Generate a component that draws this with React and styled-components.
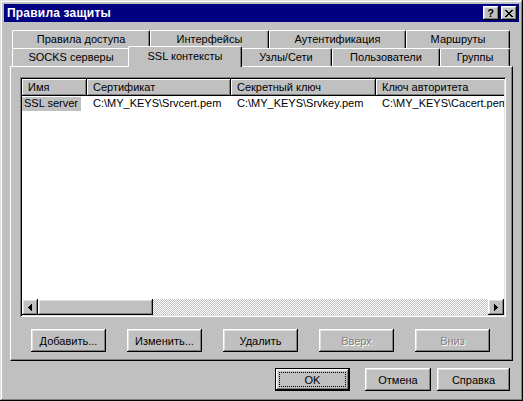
import React from 'react';
import styled, { createGlobalStyle, css } from 'styled-components';

const GlobalStyle = createGlobalStyle`
  html, body {
    margin: 0;
    padding: 0;
    background: #c0c0c0;
  }
  body {
    font-family: "Liberation Sans", Arial, sans-serif;
    font-size: 11px;
    color: #000;
  }
  * { box-sizing: border-box; }
`;

// classic 3d bevels
const raised = css`
  box-shadow: inset -1px -1px #000, inset 1px 1px #fff,
    inset -2px -2px #808080, inset 2px 2px #dfdfdf;
`;

const Window = styled.div`
  width: 523px;
  height: 401px;
  padding: 4px;
  background: #c0c0c0;
  display: flex;
  flex-direction: column;
  box-shadow: inset -1px -1px #000, inset 1px 1px #dfdfdf,
    inset -2px -2px #808080, inset 2px 2px #fff;
`;

const TitleBar = styled.div`
  height: 18px;
  background: #000080;
  display: flex;
  align-items: center;
  padding: 0 2px 0 3px;
`;

const Title = styled.div`
  flex: 1;
  color: #fff;
  font-weight: bold;
  font-size: 12px;
  letter-spacing: 0.2px;
`;

const CaptionButtons = styled.div`
  display: flex;
  gap: 2px;
`;

const CaptionButton = styled.div`
  width: 16px;
  height: 14px;
  background: #c0c0c0;
  ${raised};
  display: flex;
  align-items: center;
  justify-content: center;
  font-weight: bold;
  font-size: 11px;
  line-height: 1;
  padding-right: 1px;
`;

const Body = styled.div`
  flex: 1;
  display: flex;
  flex-direction: column;
  padding: 8px 6px 0 6px;
`;

const TabStrip = styled.div`
  margin: 0 3px 0 2px;
`;

const TabRow = styled.div`
  display: flex;
  height: 18px;
`;

const Tab = styled.div`
  width: ${p => p.$w}px;
  height: 18px;
  flex-shrink: 0;
  background: #c0c0c0;
  border-top: 1px solid #fff;
  border-left: 1px solid #fff;
  border-right: 1px solid #000;
  border-radius: 2px 2px 0 0;
  box-shadow: inset -1px 0 #808080;
  display: flex;
  justify-content: center;
  padding-top: 2px;
  white-space: nowrap;

  ${p => p.$active && css`
    width: ${p.$w + 4}px;
    height: 21px;
    margin: -2px -2px -1px;
    position: relative;
    z-index: 1;
    padding-top: 3px;
  `}
`;

const Panel = styled.div`
  height: 295px;
  border-top: 1px solid #fff;
  border-left: 1px solid #fff;
  border-right: 1px solid #000;
  border-bottom: 1px solid #000;
  box-shadow: inset -1px -1px #808080;
  padding: 10px 0 0 9px;
  display: flex;
  flex-direction: column;
`;

const ListView = styled.div`
  width: 486px;
  height: 240px;
  background: #fff;
  padding: 2px;
  display: flex;
  flex-direction: column;
  overflow: hidden;
  box-shadow: inset 1px 1px #808080, inset -1px -1px #fff,
    inset 2px 2px #000, inset -2px -2px #dfdfdf;
`;

const HeaderRow = styled.div`
  display: flex;
  height: 17px;
  overflow: hidden;
  flex-shrink: 0;
`;

const HeaderCell = styled.div`
  width: ${p => p.$w}px;
  flex-shrink: 0;
  background: #c0c0c0;
  padding: 2px 0 0 6px;
  white-space: nowrap;
  box-shadow: inset -1px -1px #000, inset 1px 1px #fff, inset -2px -2px #808080;
`;

const Row = styled.div`
  display: flex;
  height: 15px;
  overflow: hidden;
  flex-shrink: 0;
  padding-top: 1px;
`;

const Cell = styled.div`
  width: ${p => p.$w}px;
  flex-shrink: 0;
  padding-left: ${p => (p.$first ? 0 : 6)}px;
  white-space: nowrap;
  overflow: hidden;
`;

const Selected = styled.span`
  background: #c0c0c0;
  padding: 0 3px 0 2px;
  display: inline-block;
  height: 14px;
`;

const Spacer = styled.div`
  flex: 1;
`;

const ScrollBar = styled.div`
  display: flex;
  height: 16px;
  flex-shrink: 0;
`;

const ScrollButton = styled.div`
  width: 16px;
  height: 16px;
  flex-shrink: 0;
  background: #c0c0c0;
  ${raised};
  display: flex;
  align-items: center;
  justify-content: center;
`;

const Thumb = styled.div`
  width: 115px;
  height: 16px;
  flex-shrink: 0;
  background: #c0c0c0;
  ${raised};
`;

const Track = styled.div`
  flex: 1;
  background: repeating-conic-gradient(#c0c0c0 0% 25%, #fff 0% 50%) 0 0 / 2px 2px;
`;

const ActionRow = styled.div`
  display: flex;
  gap: 21px;
  margin: 12px 0 0 11px;
`;

const Button = styled.button`
  width: ${p => p.$w || 75}px;
  height: 23px;
  padding: 0;
  border: none;
  background: #c0c0c0;
  font-family: inherit;
  font-size: 11px;
  color: #000;
  position: relative;
  ${raised};

  ${p => p.disabled && css`
    color: #808080;
    text-shadow: 1px 1px #fff;
  `}

  ${p => p.$default && css`
    border: 1px solid #000;
    &::after {
      content: '';
      position: absolute;
      inset: 3px;
      border: 1px dotted #000;
    }
  `}
`;

const Footer = styled.div`
  display: flex;
  justify-content: flex-end;
  padding: 7px 3px 0 0;
`;

const FooterButtons = styled.div`
  display: flex;
  gap: ${p => p.$gap}px;
`;

const CloseIcon = () => (
  <svg width="8" height="7" viewBox="0 0 8 7" shapeRendering="crispEdges">
    <path d="M0 0h2v1H0zM6 0h2v1H6zM1 1h2v1H1zM5 1h2v1H5zM2 2h4v1H2zM3 3h2v1H3zM2 4h4v1H2zM1 5h2v1H1zM5 5h2v1H5zM0 6h2v1H0zM6 6h2v1H6z" fill="#000" />
  </svg>
);

const Arrow = ({ dir }) => (
  <svg width="4" height="7" viewBox="0 0 4 7" shapeRendering="crispEdges">
    {dir === 'left'
      ? <path d="M3 0h1v7H3zM2 1h1v5H2zM1 2h1v3H1zM0 3h1v1H0z" fill="#000" />
      : <path d="M0 0h1v7H0zM1 1h1v5H1zM2 2h1v3H2zM3 3h1v1H3z" fill="#000" />}
  </svg>
);

const backTabs = [
  { label: 'Правила доступа', w: 138 },
  { label: 'Интерфейсы', w: 119 },
  { label: 'Аутентификация', w: 137 },
  { label: 'Маршруты', w: 104 },
];

const frontTabs = [
  { label: 'SOCKS серверы', w: 118 },
  { label: 'SSL контексты', w: 110, active: true },
  { label: 'Узлы/Сети', w: 92 },
  { label: 'Пользователи', w: 108 },
  { label: 'Группы', w: 70 },
];

const columns = [
  { label: 'Имя', w: 65 },
  { label: 'Сертификат', w: 144 },
  { label: 'Секретный ключ', w: 145 },
  { label: 'Ключ авторитета', w: 150 },
];

const rows = [
  ['SSL server', 'C:\\MY_KEYS\\Srvcert.pem', 'C:\\MY_KEYS\\Srvkey.pem', 'C:\\MY_KEYS\\Cacert.pem'],
];

export default function App() {
  return (
    <>
      <GlobalStyle />
      <Window>
        <TitleBar>
          <Title>Правила защиты</Title>
          <CaptionButtons>
            <CaptionButton>?</CaptionButton>
            <CaptionButton><CloseIcon /></CaptionButton>
          </CaptionButtons>
        </TitleBar>

        <Body>
          <TabStrip>
            <TabRow>
              {backTabs.map(t => <Tab key={t.label} $w={t.w}>{t.label}</Tab>)}
            </TabRow>
            <TabRow>
              {frontTabs.map(t => (
                <Tab key={t.label} $w={t.w} $active={t.active}>{t.label}</Tab>
              ))}
            </TabRow>
          </TabStrip>

          <Panel>
            <ListView>
              <HeaderRow>
                {columns.map(c => <HeaderCell key={c.label} $w={c.w}>{c.label}</HeaderCell>)}
              </HeaderRow>
              {rows.map(r => (
                <Row key={r[0]}>
                  {r.map((v, i) => (
                    <Cell key={i} $w={columns[i].w} $first={i === 0}>
                      {i === 0 ? <Selected>{v}</Selected> : v}
                    </Cell>
                  ))}
                </Row>
              ))}
              <Spacer />
              <ScrollBar>
                <ScrollButton><Arrow dir="left" /></ScrollButton>
                <Thumb />
                <Track />
                <ScrollButton><Arrow dir="right" /></ScrollButton>
              </ScrollBar>
            </ListView>

            <ActionRow>
              <Button>Добавить...</Button>
              <Button>Изменить...</Button>
              <Button>Удалить</Button>
              <Button disabled>Вверх</Button>
              <Button disabled>Вниз</Button>
            </ActionRow>
          </Panel>

          <Footer>
            <FooterButtons $gap={15}>
              <Button $default>OK</Button>
              <FooterButtons $gap={6}>
                <Button $w={66}>Отмена</Button>
                <Button $w={73}>Справка</Button>
              </FooterButtons>
            </FooterButtons>
          </Footer>
        </Body>
      </Window>
    </>
  );
}
